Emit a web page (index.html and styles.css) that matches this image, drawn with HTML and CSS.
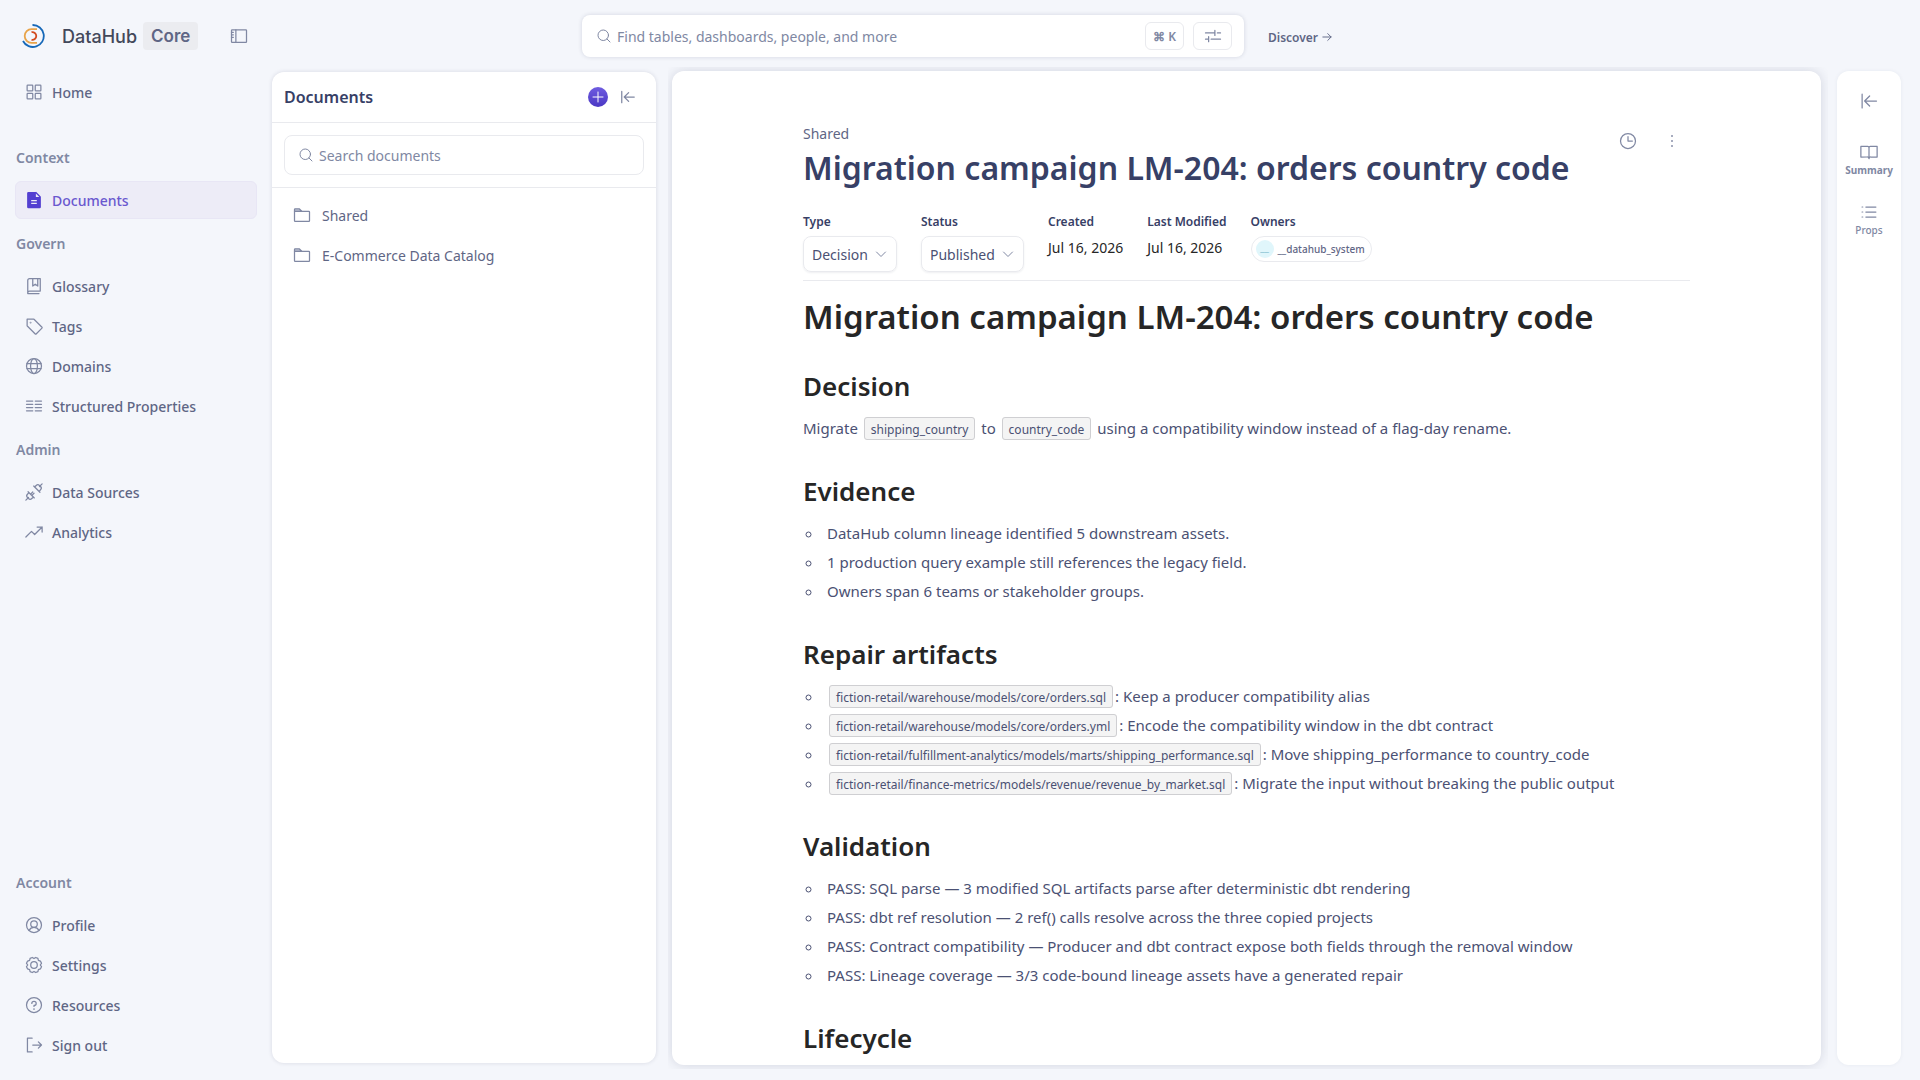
FILE: index.html
```html
<!DOCTYPE html>
<html lang="en">
<head>
    <meta charset="UTF-8">
    <meta name="viewport" content="width=device-width, initial-scale=1.0">
    <title>DataHub - Migration campaign LM-204</title>
    <link rel="stylesheet" href="styles.css">
</head>
<body>

    <header class="header">
        <div class="brand">
            <svg class="logo" viewBox="0 0 24 24">
                <path d="M10.5 1A11 11 0 1 1 1 17" stroke="#1668b8" stroke-width="1.8"/>
                <path d="M15 5.2H9.5A6.8 6.8 0 0 0 9.5 18.8H15" stroke="#e8a44a" stroke-width="1.8"/>
                <path d="M9.5 8.2A3.9 3.9 0 1 1 9.5 15.8" stroke="#d2491f" stroke-width="1.8"/>
            </svg>
            <span class="brand-name">DataHub</span>
            <span class="brand-badge">Core</span>
            <button class="icon-btn collapse-btn" aria-label="Collapse sidebar">
                <svg class="icon" viewBox="0 0 256 256"><rect x="32" y="48" width="192" height="160" rx="8"/><path d="M88 48V208M32 80H56M32 112H56M32 144H56"/></svg>
            </button>
        </div>
        <form class="search">
            <svg class="icon icon-sm" viewBox="0 0 256 256"><circle cx="116" cy="116" r="84"/><path d="M175 175L224 224"/></svg>
            <input type="text" class="search-input" placeholder="Find tables, dashboards, people, and more" aria-label="Search">
            <button type="button" class="search-btn">⌘ K</button>
            <button type="button" class="search-btn" aria-label="Filters">
                <svg class="icon" viewBox="0 0 256 256"><path d="M32 88H152M152 56V120M184 88H224M32 168H72M104 168H224M72 136V200"/></svg>
            </button>
        </form>
        <div class="header-end">
            <a href="#" class="discover">Discover
                <svg class="icon icon-xs" viewBox="0 0 256 256"><path d="M40 128H216M144 56L216 128L144 200"/></svg>
            </a>
        </div>
    </header>

    <div class="layout">
        <nav class="sidebar">
            <a href="#" class="nav-item">
                <svg class="icon" viewBox="0 0 256 256"><rect x="40" y="40" width="72" height="72" rx="8"/><rect x="144" y="40" width="72" height="72" rx="8"/><rect x="40" y="144" width="72" height="72" rx="8"/><rect x="144" y="144" width="72" height="72" rx="8"/></svg>
                Home
            </a>
            <h2 class="nav-header nav-header-first">Context</h2>
            <a href="#" class="nav-item active">
                <svg class="icon icon-fill" viewBox="0 0 256 256"><path fill-rule="evenodd" d="M214 82L158 26A8 8 0 0 0 152 24H56A16 16 0 0 0 40 40V216A16 16 0 0 0 56 232H200A16 16 0 0 0 216 216V88A8 8 0 0 0 214 82ZM152 44L196 88H152ZM92 128H164V144H92ZM92 164H164V180H92Z"/></svg>
                Documents
            </a>
            <h2 class="nav-header">Govern</h2>
            <a href="#" class="nav-item">
                <svg class="icon" viewBox="0 0 256 256"><path d="M48 216A24 24 0 0 1 72 192H208V32H72A24 24 0 0 0 48 56ZM48 216V224H192M112 32V128L144 104L176 128V32"/></svg>
                Glossary
            </a>
            <a href="#" class="nav-item">
                <svg class="icon" viewBox="0 0 256 256"><path d="M122 40H40V122A8 8 0 0 0 42 128L144 230A8 8 0 0 0 155 230L230 155A8 8 0 0 0 230 144L128 42A8 8 0 0 0 122 40Z"/><circle cx="84" cy="84" r="4"/></svg>
                Tags
            </a>
            <a href="#" class="nav-item">
                <svg class="icon" viewBox="0 0 256 256"><circle cx="128" cy="128" r="96"/><ellipse cx="128" cy="128" rx="44" ry="96"/><path d="M38 96H218M38 160H218"/></svg>
                Domains
            </a>
            <a href="#" class="nav-item">
                <svg class="icon" viewBox="0 0 256 256"><path d="M32 64H112M144 64H224M32 106H112M144 106H224M32 148H112M144 148H224M32 190H112M144 190H224"/></svg>
                Structured Properties
            </a>
            <h2 class="nav-header">Admin</h2>
            <a href="#" class="nav-item">
                <svg class="icon" viewBox="0 0 256 256"><path d="M24 232L58 198M64 136L120 192L100 212A30 30 0 0 1 58 212L44 198A30 30 0 0 1 44 156ZM52 124L132 204M88 152L112 128M104 168L128 144M232 24L198 58M136 64L192 120L212 100A30 30 0 0 0 212 58L198 44A30 30 0 0 0 156 44ZM124 52L204 132"/></svg>
                Data Sources
            </a>
            <a href="#" class="nav-item">
                <svg class="icon" viewBox="0 0 256 256"><path d="M24 192L96 120L136 160L232 64M168 64H232V128"/></svg>
                Analytics
            </a>
            <h2 class="nav-header nav-header-bottom">Account</h2>
            <a href="#" class="nav-item">
                <svg class="icon" viewBox="0 0 256 256"><circle cx="128" cy="128" r="96"/><circle cx="128" cy="116" r="42"/><path d="M64 199A72 72 0 0 1 192 199"/></svg>
                Profile
            </a>
            <a href="#" class="nav-item">
                <svg class="icon" viewBox="0 0 256 256"><circle cx="128" cy="128" r="42"/><path d="M106 32L128 46L150 32L178 44L184 70L210 78L224 106L208 128L224 150L210 178L184 186L178 212L150 224L128 210L106 224L78 212L72 186L46 178L32 150L48 128L32 106L46 78L72 70L78 44Z"/></svg>
                Settings
            </a>
            <a href="#" class="nav-item">
                <svg class="icon" viewBox="0 0 256 256"><circle cx="128" cy="128" r="96"/><path d="M100 108A28 26 0 1 1 128 134V146"/><circle cx="128" cy="180" r="4"/></svg>
                Resources
            </a>
            <a href="#" class="nav-item">
                <svg class="icon" viewBox="0 0 256 256"><path d="M104 40H44V216H104M112 128H224M184 88L224 128L184 168"/></svg>
                Sign out
            </a>
        </nav>

        <aside class="docs">
            <div class="docs-header">
                <h2 class="docs-title">Documents</h2>
                <button class="add-btn" aria-label="New document">
                    <svg class="icon" viewBox="0 0 256 256"><path d="M48 128H208M128 48V208"/></svg>
                </button>
                <button class="icon-btn" aria-label="Collapse documents">
                    <svg class="icon" viewBox="0 0 256 256"><path d="M48 56V200M80 128H208M136 72L80 128L136 184"/></svg>
                </button>
            </div>
            <div class="docs-search">
                <label class="docs-search-box">
                    <svg class="icon icon-sm" viewBox="0 0 256 256"><circle cx="116" cy="116" r="84"/><path d="M175 175L224 224"/></svg>
                    <input type="text" class="search-input" placeholder="Search documents" aria-label="Search documents">
                </label>
            </div>
            <div class="docs-list">
                <a href="#" class="folder">
                    <svg class="icon" viewBox="0 0 256 256"><path class="folder-tab" d="M32 80V56A8 8 0 0 1 40 48H92L124 80Z"/><path d="M32 80H216A8 8 0 0 1 224 88V200A8 8 0 0 1 216 208H40A8 8 0 0 1 32 200Z"/></svg>
                    Shared
                </a>
                <a href="#" class="folder">
                    <svg class="icon" viewBox="0 0 256 256"><path class="folder-tab" d="M32 80V56A8 8 0 0 1 40 48H92L124 80Z"/><path d="M32 80H216A8 8 0 0 1 224 88V200A8 8 0 0 1 216 208H40A8 8 0 0 1 32 200Z"/></svg>
                    E-Commerce Data Catalog
                </a>
            </div>
        </aside>

        <main class="page">
            <article class="doc">
                <div class="doc-top">
                    <div>
                        <a href="#" class="crumb">Shared</a>
                        <h1 class="doc-title">Migration campaign LM-204: orders country code</h1>
                    </div>
                    <div class="doc-actions">
                        <button class="icon-btn" aria-label="History">
                            <svg class="icon" viewBox="0 0 256 256"><circle cx="128" cy="128" r="96"/><path d="M128 72V128H184"/></svg>
                        </button>
                        <button class="icon-btn" aria-label="More">
                            <svg class="icon icon-fill" viewBox="0 0 256 256"><circle cx="128" cy="64" r="12"/><circle cx="128" cy="128" r="12"/><circle cx="128" cy="192" r="12"/></svg>
                        </button>
                    </div>
                </div>

                <div class="props">
                    <div class="prop">
                        <label class="prop-name" for="type">Type</label>
                        <span class="select-box">
                            <select id="type"><option>Decision</option></select>
                            <svg class="icon icon-sm" viewBox="0 0 256 256"><path d="M56 96L128 168L200 96"/></svg>
                        </span>
                    </div>
                    <div class="prop">
                        <label class="prop-name" for="status">Status</label>
                        <span class="select-box">
                            <select id="status"><option>Published</option></select>
                            <svg class="icon icon-sm" viewBox="0 0 256 256"><path d="M56 96L128 168L200 96"/></svg>
                        </span>
                    </div>
                    <div class="prop">
                        <span class="prop-name">Created</span>
                        <span class="prop-date">Jul 16, 2026</span>
                    </div>
                    <div class="prop">
                        <span class="prop-name">Last Modified</span>
                        <span class="prop-date">Jul 16, 2026</span>
                    </div>
                    <div class="prop">
                        <span class="prop-name">Owners</span>
                        <a href="#" class="owner"><span class="avatar">__</span>__datahub_system</a>
                    </div>
                </div>

                <div class="content">
                    <h1>Migration campaign LM-204: orders country code</h1>
                    <h2>Decision</h2>
                    <p>Migrate <code>shipping_country</code> to <code>country_code</code> using a compatibility window instead of a flag-day rename.</p>
                    <h2>Evidence</h2>
                    <ul>
                        <li>DataHub column lineage identified 5 downstream assets.</li>
                        <li>1 production query example still references the legacy field.</li>
                        <li>Owners span 6 teams or stakeholder groups.</li>
                    </ul>
                    <h2>Repair artifacts</h2>
                    <ul>
                        <li><code>fiction-retail/warehouse/models/core/orders.sql</code>: Keep a producer compatibility alias</li>
                        <li><code>fiction-retail/warehouse/models/core/orders.yml</code>: Encode the compatibility window in the dbt contract</li>
                        <li><code>fiction-retail/fulfillment-analytics/models/marts/shipping_performance.sql</code>: Move shipping_performance to country_code</li>
                        <li><code>fiction-retail/finance-metrics/models/revenue/revenue_by_market.sql</code>: Migrate the input without breaking the public output</li>
                    </ul>
                    <h2>Validation</h2>
                    <ul>
                        <li>PASS: SQL parse — 3 modified SQL artifacts parse after deterministic dbt rendering</li>
                        <li>PASS: dbt ref resolution — 2 ref() calls resolve across the three copied projects</li>
                        <li>PASS: Contract compatibility — Producer and dbt contract expose both fields through the removal window</li>
                        <li>PASS: Lineage coverage — 3/3 code-bound lineage assets have a generated repair</li>
                    </ul>
                    <h2>Lifecycle</h2>
                </div>
            </article>
        </main>

        <aside class="rail">
            <button class="icon-btn" aria-label="Expand panel">
                <svg class="icon" viewBox="0 0 256 256"><path d="M40 40V216M72 128H224M136 64L72 128L136 192"/></svg>
            </button>
            <button class="rail-btn active">
                <svg class="icon" viewBox="0 0 256 256"><path d="M128 72A16 16 0 0 1 144 56H232V192H152A24 24 0 0 0 128 212A24 24 0 0 0 104 192H24V56H112A16 16 0 0 1 128 72V212"/></svg>
                Summary
            </button>
            <button class="rail-btn">
                <svg class="icon" viewBox="0 0 256 256"><path d="M88 64H216M88 128H216M88 192H216"/><circle cx="44" cy="64" r="3"/><circle cx="44" cy="128" r="3"/><circle cx="44" cy="192" r="3"/></svg>
                Props
            </button>
        </aside>
    </div>

</body>
</html>
```
FILE: styles.css
```css
* {
    margin: 0;
    padding: 0;
    box-sizing: border-box;
}
body {
    display: flex;
    flex-direction: column;
    height: 100vh;
    overflow: hidden;
    background: #f4f6fb;
    color: #5f6685;
    font-family: 'Noto Sans', sans-serif;
    font-size: 14px;
}
a {
    color: inherit;
    text-decoration: none;
}
button, input, select {
    font-family: inherit;
    color: inherit;
    background: transparent;
    border: none;
    outline: none;
}
.icon {
    width: 20px;
    height: 20px;
    flex: none;
    fill: none;
    stroke: #8088a3;
    stroke-width: 16;
    stroke-linecap: round;
    stroke-linejoin: round;
}
.icon-sm {
    width: 16px;
    height: 16px;
}
.icon-xs {
    width: 12px;
    height: 12px;
    stroke: #5f6685;
    stroke-width: 20;
}
.icon-fill {
    fill: #8088a3;
    stroke: none;
}
.icon-btn {
    display: flex;
}

/* header */
.header {
    display: flex;
    align-items: center;
    gap: 24px;
    height: 67px;
    padding: 5px 116px 0 0;
    flex: none;
}
.brand, .header-end {
    flex: 1;
}
.brand {
    display: flex;
    align-items: center;
    padding-left: 22px;
}
.logo {
    width: 24px;
    height: 24px;
    fill: none;
}
.brand-name {
    margin-left: 16px;
    font-family: Inter, sans-serif;
    font-size: 18px;
    font-weight: 500;
    color: #43485a;
}
.brand-badge {
    margin-left: 6px;
    padding: 0 8px;
    border-radius: 4px;
    background: #ebecf0;
    font-family: Inter, sans-serif;
    font-size: 17px;
    font-weight: 600;
    line-height: 28px;
}
.collapse-btn {
    margin-left: 31px;
}
.search {
    display: flex;
    align-items: center;
    width: 662px;
    height: 42px;
    padding: 0 12px 0 14px;
    background: #fff;
    border-radius: 8px;
    box-shadow: 0 0 4px rgba(40, 45, 80, 0.16);
}
.search-input {
    flex: 1;
    min-width: 0;
    margin-left: 5px;
    font-size: 14px;
}
.search-input::placeholder {
    color: #8088a3;
}
.search-btn {
    display: flex;
    align-items: center;
    justify-content: center;
    width: 39px;
    height: 28px;
    margin-left: 9px;
    border: 1px solid #e9eaee;
    border-radius: 6px;
    font-size: 12px;
    font-weight: 600;
    color: #8088a3;
}
.discover {
    display: inline-flex;
    align-items: center;
    gap: 3px;
    font-size: 12px;
    font-weight: 600;
}

/* sidebar */
.layout {
    display: flex;
    flex: 1;
    min-height: 0;
    margin-bottom: 11px;
}
.sidebar {
    display: flex;
    flex-direction: column;
    width: 272px;
    flex: none;
    padding: 6px 15px 3px;
}
.nav-item {
    display: flex;
    align-items: center;
    gap: 8px;
    height: 38px;
    margin-bottom: 2px;
    padding: 0 8px;
    border: 1px solid transparent;
    border-radius: 6px;
    font-weight: 500;
}
.nav-item.active {
    background: #edecf7;
    border-color: #e8e6f5;
    color: #6a58cf;
}
.nav-item.active .icon {
    fill: #533fd1;
}
.nav-header {
    padding-left: 1px;
    font-size: 14px;
    font-weight: 600;
    line-height: 46px;
    color: #8088a3;
}
.nav-header-first {
    margin-top: 22px;
}
.nav-header-bottom {
    margin-top: auto;
}

/* documents tree */
.docs {
    width: 384px;
    flex: none;
    margin: 5px 0 6px;
    background: #fff;
    border-radius: 12px;
    box-shadow: 0 0 4px rgba(40, 45, 80, 0.14);
}
.docs-header {
    display: flex;
    align-items: center;
    gap: 10px;
    height: 51px;
    padding: 0 18px 0 12px;
    border-bottom: 1px solid #e9eaee;
}
.docs-title {
    flex: 1;
    font-size: 16px;
    font-weight: 600;
    color: #374066;
}
.add-btn {
    display: flex;
    padding: 2px;
    border-radius: 50%;
    background: linear-gradient(#6f5ce0, #4a37c4);
}
.add-btn .icon {
    width: 16px;
    height: 16px;
    stroke: #fff;
}
.docs-search {
    padding: 12px;
    border-bottom: 1px solid #e9eaee;
}
.docs-search-box {
    display: flex;
    align-items: center;
    height: 40px;
    padding: 0 13px;
    border: 1px solid #e9eaee;
    border-radius: 8px;
}
.docs-list {
    padding: 7px 20px;
}
.folder {
    display: flex;
    align-items: center;
    gap: 10px;
    height: 40px;
}
.folder-tab {
    fill: #c9cddb;
}

/* document */
.page {
    display: flex;
    flex: 1;
    min-width: 0;
    margin-left: 12px;
    padding: 4px 7px 4px 4px;
    overflow: hidden;
}
.doc {
    flex: 1;
    padding: 50px 131px 0;
    overflow: hidden;
    background: #fff;
    border-radius: 12px;
    box-shadow: 0 0 12px rgba(40, 45, 80, 0.16);
}
.doc-top {
    display: flex;
    justify-content: space-between;
}
.crumb {
    display: block;
    line-height: 26px;
}
.doc-title {
    font-size: 32px;
    font-weight: 600;
    line-height: 42px;
    color: #374066;
}
.doc-actions {
    display: flex;
    gap: 24px;
    padding: 10px 8px 0 0;
}
.props {
    display: flex;
    gap: 24px;
    margin-top: 23px;
    padding-bottom: 8px;
    border-bottom: 1px solid #e9eaee;
}
.prop-name {
    display: block;
    margin-bottom: 4px;
    font-size: 12px;
    font-weight: 600;
    line-height: 20px;
    color: #374066;
}
.select-box {
    position: relative;
    display: block;
}
.select-box select {
    appearance: none;
    height: 36px;
    padding: 0 28px 0 8px;
    border: 1px solid #e9eaee;
    border-radius: 8px;
    box-shadow: 0 1px 2px rgba(40, 45, 80, 0.08);
    font-size: 14px;
    color: #4b5173;
}
.select-box .icon {
    position: absolute;
    top: 10px;
    right: 8px;
    pointer-events: none;
}
.prop-date {
    display: block;
    line-height: 24px;
    color: #262626;
}
.owner {
    display: flex;
    align-items: center;
    gap: 4px;
    height: 26px;
    padding: 0 6px 0 4px;
    border: 1px solid #e9eaee;
    border-radius: 13px;
    font-size: 10px;
    font-weight: 500;
}
.avatar {
    width: 18px;
    height: 18px;
    border-radius: 50%;
    background: #e0f6fb;
    line-height: 14px;
    text-align: center;
    color: #8cc4d4;
}
.content {
    color: #4b5173;
    font-size: 15px;
    line-height: 29px;
}
.content h1, .content h2 {
    color: #262626;
    font-weight: 600;
}
.content h1 {
    margin-top: 13px;
    font-size: 33px;
    line-height: 46px;
}
.content h2 {
    margin: 30px 0 10px;
    font-size: 26px;
    line-height: 36px;
}
.content h1 + h2 {
    margin-top: 28px;
}
.content ul {
    padding-left: 20px;
    list-style: circle;
}
.content li {
    padding-left: 4px;
}
.content code {
    margin: 0 2px;
    padding: 3px 6px 1px;
    border: 1px solid #cfcfd2;
    border-radius: 3px;
    background: #f4f4f4;
    font-family: inherit;
    font-size: 12px;
    line-height: 16px;
}

/* right rail */
.rail {
    display: flex;
    flex-direction: column;
    align-items: center;
    width: 64px;
    flex: none;
    margin: 4px 19px 4px 9px;
    padding-top: 20px;
    background: #fff;
    border-radius: 12px;
    box-shadow: 0 0 4px rgba(40, 45, 80, 0.06);
}
.rail-btn {
    display: flex;
    flex-direction: column;
    align-items: center;
    margin-top: 31px;
    font-size: 10px;
    font-weight: 500;
    line-height: 16px;
    color: #8088a3;
}
.rail-btn + .rail-btn {
    margin-top: 24px;
}
.rail-btn.active {
    font-weight: 700;
}
```
